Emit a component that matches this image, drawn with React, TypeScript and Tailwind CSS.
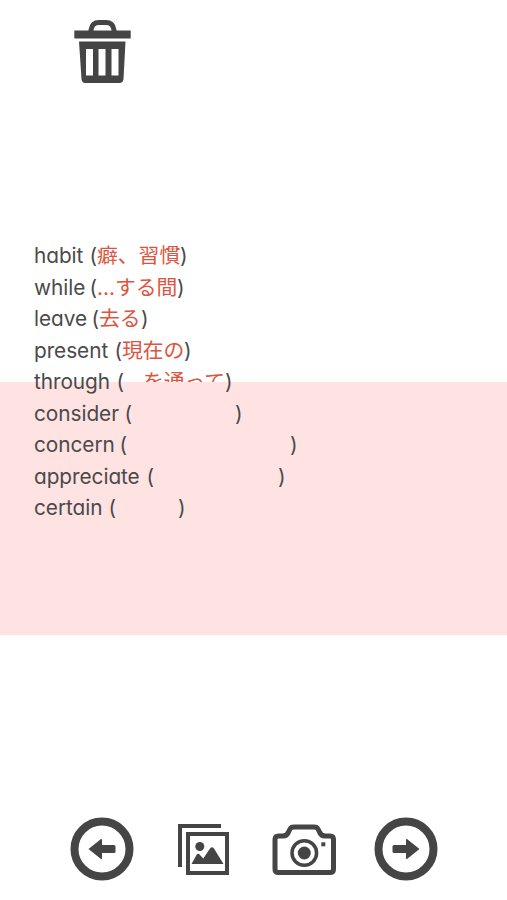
import React from 'react';

interface Entry {
  word: string;
  wordWidth: string;
  meaning: string;
  meaningWidth: string;
}

// Answers that sit fully under the red sheet only keep their space
const entries: Entry[] = [
  { word: 'habit', wordWidth: 'w-[63px]', meaning: '癖、習慣', meaningWidth: 'w-[83px]' },
  { word: 'while', wordWidth: 'w-[63px]', meaning: '...する間', meaningWidth: 'w-[80px]' },
  { word: 'leave', wordWidth: 'w-[65px]', meaning: '去る', meaningWidth: 'w-[42px]' },
  { word: 'present', wordWidth: 'w-[88px]', meaning: '現在の', meaningWidth: 'w-[62px]' },
  { word: 'through', wordWidth: 'w-[90px]', meaning: 'を通って', meaningWidth: 'w-[101px]' },
  { word: 'consider', wordWidth: 'w-[98px]', meaning: '', meaningWidth: 'w-[103px]' },
  { word: 'concern', wordWidth: 'w-[93px]', meaning: '', meaningWidth: 'w-[163px]' },
  { word: 'appreciate', wordWidth: 'w-[120px]', meaning: '', meaningWidth: 'w-[124px]' },
  { word: 'certain', wordWidth: 'w-[82px]', meaning: '', meaningWidth: 'w-[62px]' },
];

const TrashIcon: React.FC = () => (
  <svg width="58" height="66" viewBox="0 0 58 66" fill="#454545">
    <path d="M17 12 V11 Q18 3.500 25 3.500 H32 Q39 3.500 40 11 V12" fill="none" stroke="#454545" strokeWidth="5" />
    <rect x="0.3" y="11.500" width="56.400" height="8" />
    <path
      fillRule="evenodd"
      d="M5 22.500 H51.500 L49.500 60 Q49 64 45.500 64 H11 Q8 64 7.500 60 Z M12 30 V56.500 H19 V30 Z M24.500 30 V56.500 H31.500 V30 Z M37.500 30 V56.500 H44.500 V30 Z"
    />
  </svg>
);

const ArrowIcon: React.FC<{ direction: 'left' | 'right' }> = ({ direction }) => (
  <svg width="64" height="64" viewBox="0 0 64 64" className={direction === 'right' ? 'rotate-180' : ''}>
    <circle cx="32" cy="32" r="27.500" fill="none" stroke="#454545" strokeWidth="8" />
    <path d="M18.500 32 L31 22 Q32 21.500 32 23 V28 H44 Q45.500 28 45.500 29.500 V34.500 Q45.500 36 44 36 H32 V41 Q32 42.500 31 42 Z" fill="#454545" />
  </svg>
);

const GalleryIcon: React.FC = () => (
  <svg width="52" height="52" viewBox="0 0 52 52" fill="#454545">
    <path d="M0 0 H43 V4 H4 V43 H0 Z" />
    <path fillRule="evenodd" d="M8 8 H51 V51 H8 Z M12 12 V47 H47 V12 Z" />
    <circle cx="21.800" cy="22.500" r="4.500" />
    <path d="M13.500 40 L18.500 31 Q20 28.500 22 31 L25.300 34.500 L32 24.500 Q34 22 36 24.500 L45.500 40 Z" />
  </svg>
);

const CameraIcon: React.FC = () => (
  <svg width="64" height="52" viewBox="0 0 64 52" fill="none" stroke="#454545" strokeWidth="5">
    <path d="M6.500 12 H11 Q15 12 16.500 8 L18 5 Q19 3 22 3 H42 Q45 3 46 5 L47.500 8 Q49 12 53 12 H58 Q61.500 12 61.500 15.500 V45 Q61.500 48.500 58 48.500 H6.500 Q3 48.500 3 45 V15.500 Q3 12 6.500 12 Z" />
    <circle cx="32.300" cy="29" r="12.300" strokeWidth="3.500" />
    <circle cx="32.300" cy="29" r="6.500" fill="#454545" stroke="none" />
    <rect x="49.300" y="18.300" width="4" height="4" fill="#454545" stroke="none" />
  </svg>
);

export default function App() {
  return (
    <main className="relative flex h-[900px] w-full flex-col overflow-hidden bg-white font-['Inter','Noto_Sans_CJK_JP',sans-serif] text-[20.8px] text-[#4a4a4a]">
      <header className="h-[240px] pt-[19px] pl-[74px]">
        <button aria-label="Delete" className="block">
          <TrashIcon />
        </button>
      </header>

      {/* Sheet that hides the red answers, with the words kept on top of it */}
      <div className="absolute top-[382px] left-0 z-10 h-[253px] w-full bg-[#ffe3e3]" />

      <ul className="flex flex-col pl-[34px] font-normal [font-feature-settings:'cv11','calt'_0]">
        {entries.map((entry) => (
          <li key={entry.word} className="flex h-[31.5px] items-center leading-[31.5px] whitespace-nowrap">
            <span className={`relative z-20 flex justify-between tracking-[-0.05px] ${entry.wordWidth}`}>
              <span>{entry.word}</span>
              <span>(</span>
            </span>
            <span className={`text-[#dc5540] ${entry.meaningWidth} ${entry.word === 'through' ? 'pl-[19px]' : ''}`}>
              {entry.meaning}
            </span>
            <span className="relative z-20">)</span>
          </li>
        ))}
      </ul>

      <nav className="mt-auto flex h-[83px] items-start">
        <button aria-label="Previous" className="ml-[70px] block">
          <ArrowIcon direction="left" />
        </button>
        <button aria-label="Gallery" className="mt-[7px] ml-[44px] block">
          <GalleryIcon />
        </button>
        <button aria-label="Camera" className="mt-[7px] ml-[42px] block">
          <CameraIcon />
        </button>
        <button aria-label="Next" className="ml-[38px] block">
          <ArrowIcon direction="right" />
        </button>
      </nav>
    </main>
  );
}
